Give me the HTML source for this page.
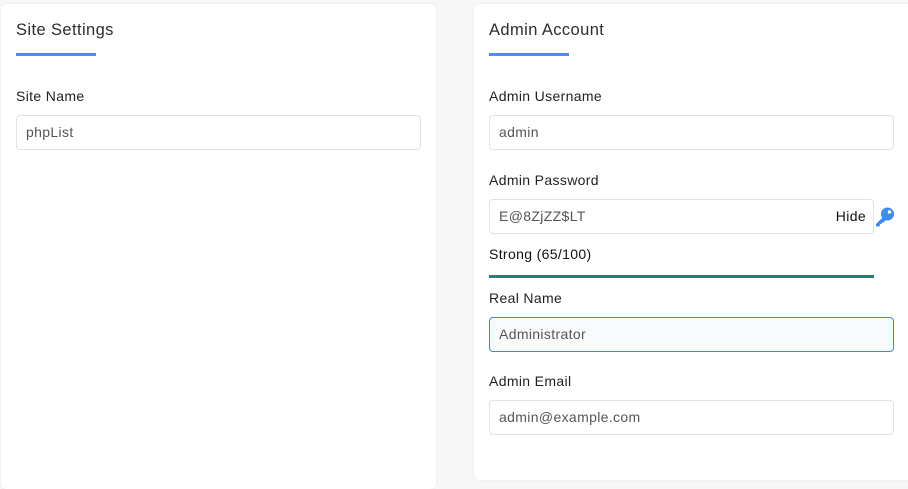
<!DOCTYPE html>
<html><head><style>
*{box-sizing:border-box;margin:0;padding:0}
body{width:908px;height:481px;background:#f7f7f7;font-family:"Liberation Sans",sans-serif;color:#2b2b2b;position:relative;overflow:hidden}
.card{position:absolute;background:#fff;border-radius:6px;box-shadow:0 0 3px rgba(0,0,0,.06)}
.t{position:absolute;font-size:16.5px;color:#2d2d2d;letter-spacing:.4px}
.u{position:absolute;height:3px;width:80px;background:#4a90e8}
.l{position:absolute;font-size:14px;color:#222;letter-spacing:.35px}
.i{position:absolute;height:35px;border:1px solid #e2e2e2;border-radius:4px;background:#fff;font-size:14px;color:#555;padding-left:9px;line-height:33px;letter-spacing:.35px}
</style></head><body>
<div class="card" style="left:1px;top:4px;width:435px;height:485px"></div>
<div class="card" style="left:474px;top:4px;width:450px;height:476px"></div>

<div class="t" style="left:16px;top:21px">Site Settings</div>
<div class="u" style="left:16px;top:53px"></div>
<div class="l" style="left:16px;top:88px">Site Name</div>
<div class="i" style="left:16px;top:115px;width:405px">phpList</div>

<div class="t" style="left:489px;top:21px">Admin Account</div>
<div class="u" style="left:489px;top:53px"></div>
<div class="l" style="left:489px;top:88px">Admin Username</div>
<div class="i" style="left:489px;top:115px;width:405px">admin</div>
<div class="l" style="left:489px;top:172px">Admin Password</div>
<div class="i" style="left:489px;top:199px;width:385px">E@8ZjZZ$LT<span style="position:absolute;right:7px;color:#111;font-size:14px">Hide</span></div>
<svg style="position:absolute;left:875px;top:207px" width="20" height="20" viewBox="0 0 20 20"><circle cx="12.5" cy="7" r="6.5" fill="#3d8de8"/><circle cx="14.5" cy="5" r="1.7" fill="#fff"/><path d="M8.5 9.5 L1 17 L1 19.5 L4 19.5 L5 18.5 L5 17 L6.5 17 L7 15.5 L8.5 15.5 L11.5 12.5 Z" fill="#3d8de8"/></svg>
<div class="l" style="left:489px;top:246px;color:#111">Strong (65/100)</div>
<div style="position:absolute;left:489px;top:275px;width:385px;height:3px;background:#14897a"></div>
<div class="l" style="left:489px;top:290px">Real Name</div>
<div class="i" style="left:489px;top:317px;width:405px;background:#f8fafc;border-color:#4a86c5">Administrator</div>
<div class="l" style="left:489px;top:373px">Admin Email</div>
<div class="i" style="left:489px;top:400px;width:405px">admin@example.com</div>
</body></html>
